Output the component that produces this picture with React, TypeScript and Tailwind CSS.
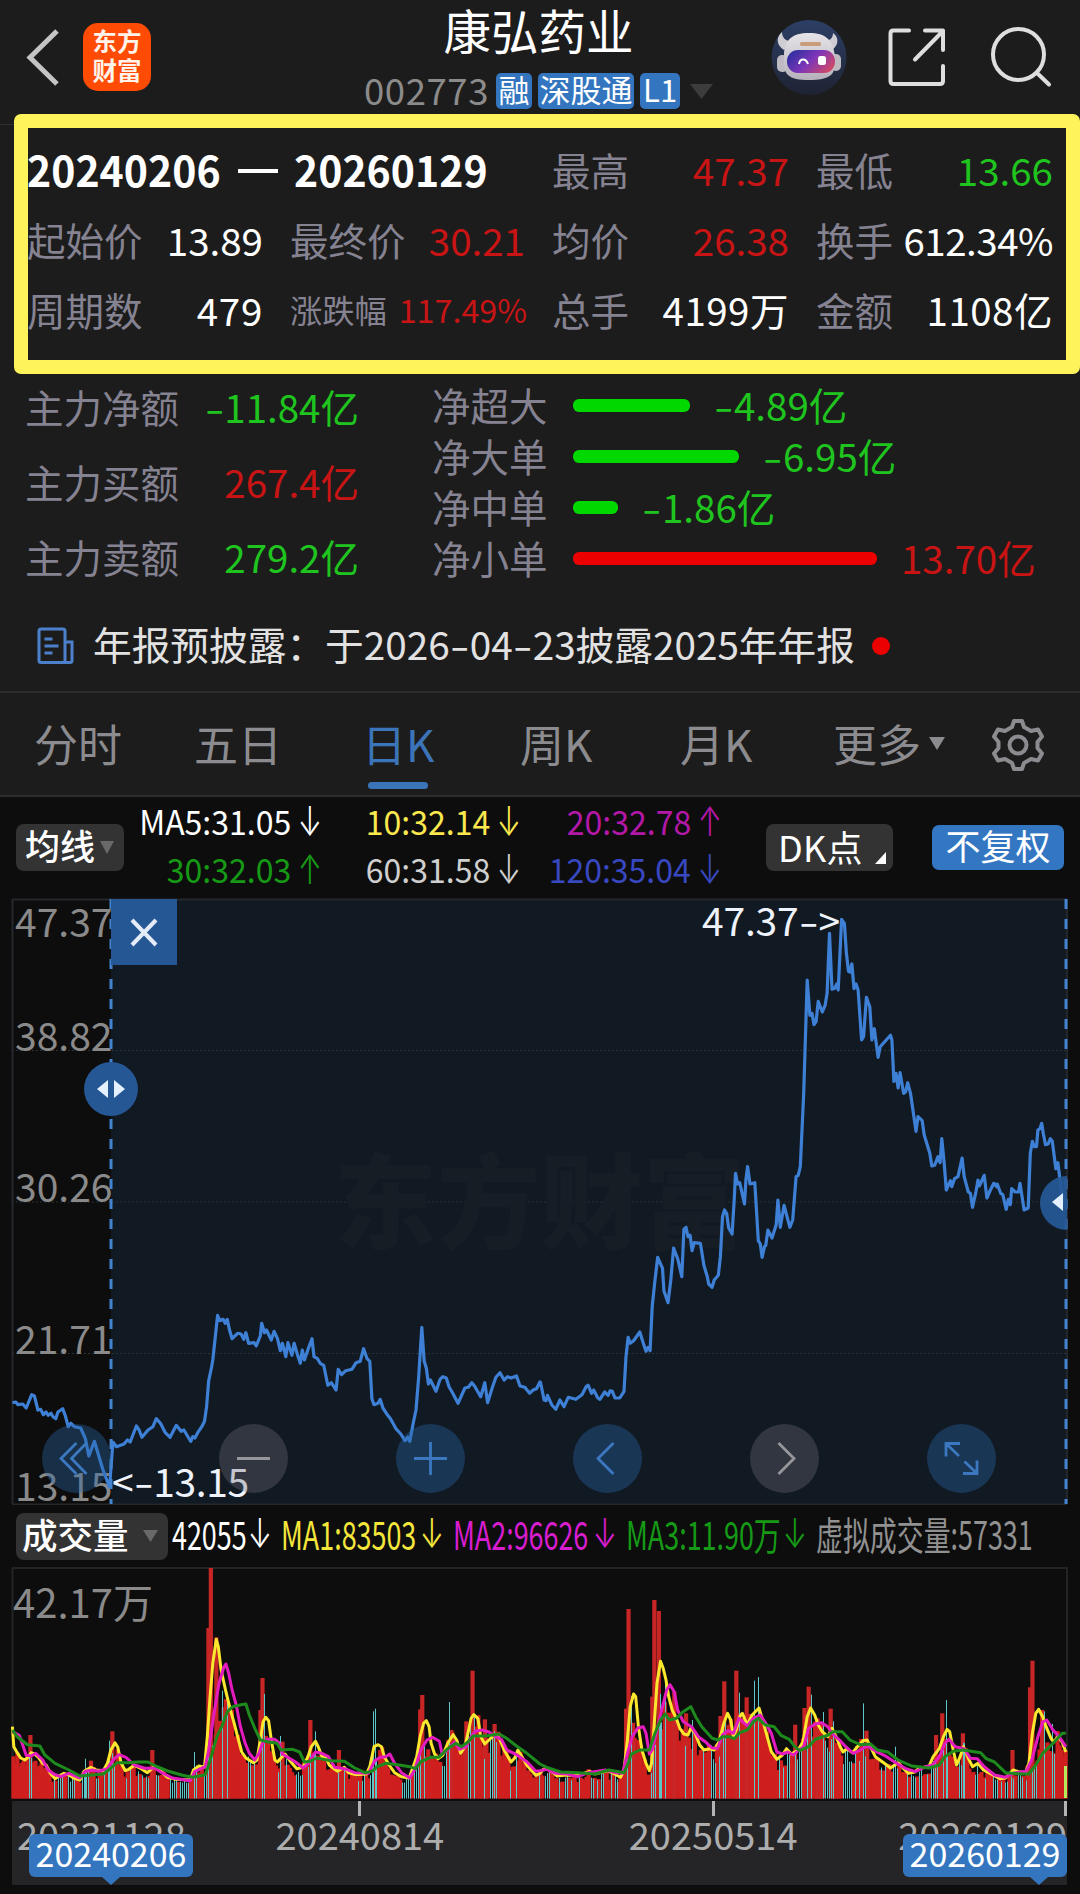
import React from 'react';

type Point = [number, number];

const CHART_SCALE_X = 2.904;
const CHART_SCALE_Y = 3;

// "x,y x,y ..." -> points, the second half of a trace starts at x = 1568
const parse = (s: string, offset = 0): Point[] =>
  s.trim().split(/\s+/).map(p => {
    const [x, y] = p.split(',').map(Number);
    return [x + offset, y] as Point;
  });

const toPolyline = (points: Point[]) =>
  points.map(([x, y]) => `${(x / CHART_SCALE_X).toFixed(1)},${(y / CHART_SCALE_Y).toFixed(1)}`).join(' ');

const priceTrace: Point[] = [
  ...parse(`36,368 46,366 52,374 66,372 76,384 92,344 100,348 110,390 118,388 126,404 134,396 140,406 148,400 154,410 162,416 168,396 182,386 190,408 198,440 206,430 216,440 234,444 248,476 258,528 274,484 298,566 318,622 328,486 338,500 360,492 370,480 378,486 396,438 404,450 412,472 430,450 444,440 454,416 466,430 480,458 494,472 512,436 526,454 534,450 548,474 554,484 560,470 566,474 574,458 586,440 594,424 600,380 606,302 614,264 618,240 632,106 638,122 648,118 654,130 660,118 666,148 674,176 690,160 700,162 708,178 714,158 722,190 738,188 744,198 756,168 760,130 768,158 774,150 788,180 796,154 806,176 814,212 820,190 830,230 836,188 848,226 854,190 864,224 872,250 878,210 884,240 896,204 906,176 912,230 922,236 930,250 940,256 952,316 962,308 976,330 982,268 992,284 1004,272 1022,268 1034,248 1046,244 1056,206 1066,236 1074,244 1080,356 1086,374 1098,370 1104,358 1112,384 1126,406 1134,416 1150,446 1164,462 1176,482 1184,472 1190,484 1200,430 1208,390 1216,290 1225,142 1232,244 1238,264 1244,312 1250,300 1266,334 1278,298 1286,290 1296,294 1304,320 1314,338 1330,370 1350,324 1360,322 1370,308 1378,318 1396,350 1408,308 1416,368 1430,322 1440,292 1452,278 1464,300 1474,290 1484,294 1500,288 1510,318 1524,322 1538,340 1548,330 1558,326 1568,306`),
  ...parse(`2,308 12,360 18,362 22,346 34,374 46,388 58,360 70,380 82,352 104,358 122,344 134,320 140,316 150,340 156,330 168,354 174,358 188,336 198,346 204,332 210,334 218,354 232,354 244,334 250,230 256,172 262,190 272,182 290,156 300,190 308,214 314,202 320,212 326,80 332,20`, 1568),
].map(([x, y]) => [x, y + 1200] as Point).concat(
  parse(`334,1200 342,1132 356,1165 360,1232 372,1268 380,1200 388,1104 400,1136 412,1190 418,1048 424,1042 430,1070 436,1066 442,1112 448,1088 466,1090 476,1156 486,1190 490,1212 500,1222 506,1200 518,1186 524,1130 530,1010 536,990 542,1000 548,1044 558,1062 564,960 568,880 574,912 580,908 594,972 598,900 603,860 610,912 624,908 634,1082 640,1092 645,1132 652,1100 656,1096 662,1050 674,1074 686,1034 691,960 698,1042 709,976 716,1004 726,1042 734,1020 744,890 750,886 756,860 766,640 776,300 784,406 790,400 796,434 802,425 808,364 820,396 828,376 834,340 841,160 848,328 856,325 862,312 866,330 876,118 884,130 890,220 896,274 900,276 906,252 912,326 918,312 924,330 934,480 940,470 948,352 958,380 964,480 971,446 982,532 988,500 1018,466 1022,480 1028,604 1034,580 1040,624 1046,578 1056,640 1062,636 1068,608 1076,640 1092,754 1098,710 1110,722 1116,765 1132,820 1138,858 1146,856 1156,830 1162,848 1167,776 1174,850 1180,930 1192,902 1196,920 1204,896 1214,890 1226,834 1232,890 1244,936 1250,940 1256,982 1266,936 1272,900 1276,918 1290,886 1298,954 1308,930 1318,910 1326,920 1328,912 1338,940 1344,944 1354,988 1360,958 1366,974 1370,926 1380,936 1390,936 1394,910 1406,990 1418,984 1424,820 1430,784 1436,800 1442,800 1446,750 1452,746 1457,730 1462,762 1468,794 1476,792 1482,776 1488,784 1498,866 1504,848 1508,880 1514,930 1524,970`, 1568),
);

const volMa1: Point[] = [
  ...parse(`36,530 40,590 50,608 60,624 72,630 84,620 90,608 100,612 110,620 124,640 134,645 146,670 160,686 172,678 186,670 200,675 214,684 232,690 244,664 264,652 280,660 300,662 312,640 322,600 334,578 342,592 352,640 364,662 374,658 390,646 410,656 428,668 448,650 466,662 486,682 510,688 552,690 562,660 578,648 594,652 602,560 610,440 618,340 628,268 634,290 642,360 656,425 668,475 680,520 690,560 702,606 714,624 736,638 746,630 756,570 764,515 772,502 780,512 788,570 798,630 806,636 814,626 828,612 842,632 862,656 880,652 894,620 904,590 916,574 924,590 936,622 944,618 956,645 980,664 1000,652 1012,668 1036,674 1064,672 1074,650 1086,590 1098,584 1108,590 1116,620 1130,645 1146,668 1166,680 1188,684 1200,650 1210,620 1220,560 1230,520 1238,512 1246,530 1252,580 1262,612 1272,626 1286,616 1300,580 1316,554 1326,570 1338,610 1350,590 1360,545 1368,505 1376,494 1388,506 1396,560 1408,582 1420,570 1436,554 1450,565 1464,600 1484,636 1494,625 1504,600 1516,620 1530,646 1556,676 1568,670`),
  ...parse(`10,658 24,656 50,678 70,676 100,676 124,672 144,664 160,672 196,662 216,672 234,682 244,660 254,570 262,470 272,432 278,440 286,530 296,600 308,640 318,662 324,640 332,520 340,400 350,334 358,355 366,390 374,440 384,480 396,505 406,535 418,552 430,555 438,535 450,548 464,585 476,600 494,596 506,600 520,575 534,520 545,490 554,510 562,560 570,540 580,500 588,490 602,525 616,495 636,474 648,515 660,560 672,605 688,628 704,615 716,596 730,612 750,600 764,575 776,500 786,474 798,495 808,525 820,545 836,560 848,535 860,560 872,590 880,606 892,596 908,608 922,590 938,572 950,570 960,590 974,620 1000,640 1018,654 1040,638 1060,660 1070,670 1088,666 1100,656 1130,648 1142,620 1160,595 1172,560 1182,538 1190,545 1200,600 1210,645 1220,620 1230,590 1244,625 1256,650 1272,640 1288,660 1310,672 1336,686 1352,684 1374,660 1390,665 1410,668 1420,640 1430,550 1440,490 1448,478 1460,500 1470,530 1484,565 1492,576 1504,560 1516,575 1527,606`, 1568),
];

const volMa2: Point[] = [
  ...parse(`36,545 56,556 66,585 76,616 90,618 104,610 124,630 140,660 156,672 176,680 200,670 232,684 248,664 268,660 286,664 312,656 330,628 346,614 366,622 390,645 420,655 450,655 470,668 500,684 552,692 566,664 584,656 596,650 606,600 620,500 636,400 650,352 656,342 664,370 674,420 686,465 698,530 712,580 724,610 740,630 752,610 762,580 776,568 798,568 810,578 820,612 840,625 858,636 880,654 896,640 916,606 934,610 954,620 972,652 1000,656 1030,668 1070,670 1088,632 1104,622 1120,620 1132,612 1146,640 1166,668 1190,684 1204,660 1222,600 1240,570 1256,562 1276,574 1284,612 1300,600 1320,576 1334,598 1354,590 1368,560 1380,544 1400,540 1420,546 1440,560 1456,568 1472,600 1500,614 1530,635 1556,664 1568,662`),
  ...parse(`20,658 46,670 80,672 110,680 140,668 190,660 220,668 240,670 254,610 268,560 284,534 300,530 308,550 318,612 326,600 340,540 356,470 368,420 378,404 390,425 400,480 416,515 440,530 460,560 480,575 500,594 516,595 530,555 546,542 562,550 578,505 602,528 620,505 640,495 656,520 672,550 688,606 704,612 720,606 736,615 752,600 766,590 780,535 800,522 818,518 836,530 848,550 870,570 888,590 910,610 930,600 950,588 976,604 1000,616 1030,636 1060,655 1090,665 1120,650 1140,645 1160,620 1176,580 1188,568 1206,590 1232,596 1250,625 1270,626 1290,650 1320,675 1350,682 1380,668 1412,664 1430,625 1446,560 1460,516 1472,510 1490,540 1508,560 1527,590`, 1568),
];

const volMa3: Point[] = [
  ...parse(`36,540 50,560 80,584 116,588 130,615 160,640 200,660 232,678 260,676 300,672 320,656 340,638 370,638 400,636 430,636 452,648 490,664 530,676 560,682 596,674 606,645 616,610 630,560 644,530 660,485 676,470 700,464 714,462 724,495 740,535 756,570 780,576 804,580 816,600 850,598 870,606 884,636 900,634 920,624 960,632 1000,634 1030,654 1060,668 1080,664 1096,650 1120,640 1160,645 1190,650 1206,656 1224,634 1250,622 1274,622 1300,596 1324,580 1340,590 1360,575 1374,558 1410,558 1450,552 1470,564 1500,588 1530,610 1568,642`),
  ...parse(`20,652 60,666 110,668 160,672 200,660 244,668 256,640 266,612 290,600 318,600 334,550 350,510 364,492 376,510 396,505 416,485 438,470 452,500 470,530 500,565 518,570 530,560 550,560 564,566 580,548 602,540 620,515 634,505 654,525 680,530 700,556 724,568 740,590 754,602 780,590 800,568 836,556 850,545 878,545 900,570 930,584 960,582 980,600 1010,606 1040,630 1080,648 1130,654 1160,645 1176,620 1200,604 1230,600 1280,608 1296,626 1320,636 1352,668 1400,672 1420,672 1440,645 1460,610 1480,590 1504,564 1517,550 1527,550`, 1568),
];

const redSpikes: Point[] = [
  ...parse('88,555 264,632 326,544 442,600 605,234 612,54 628,262 650,472 662,506 756,480 762,384 820,575 901,510 984,600 1220,478 1226,435 1310,540 1354,514 1372,362 1408,508 1436,522'),
  ...parse('250,476 257,177 270,518 326,440 332,150 345,183 390,425 424,490 524,498 535,394 570,362 600,442 741,524 768,474 780,410 806,505 844,476 948,542 1150,555 1168,490 1228,550 1372,600 1423,412 1430,332 1458,480', 1568),
];
const cyanSpikes: Point[] = [
  ...parse('246,626 316,572 564,606 646,422 658,440 768,432 814,558 914,544 1082,484 1088,476 1303,456'),
  ...parse('264,438 350,432 362,390 443,510 577,428 623,392 634,381 786,434 821,486 850,514 937,460 1030,590 1180,450 1232,580 1465,484 1488,522', 1568),
];

const valueAt = (trace: Point[], x: number) => {
  const i = trace.findIndex(p => p[0] >= x);
  if (i <= 0) return trace[i < 0 ? trace.length - 1 : 0][1];
  const [x0, y0] = trace[i - 1];
  const [x1, y1] = trace[i];
  return y0 + ((y1 - y0) * (x - x0)) / (x1 - x0 || 1);
};

const rand = (n: number) => {
  const v = Math.sin(n * 91.17 + 7.3) * 43758.5453;
  return v - Math.floor(v);
};

const days = Array.from({ length: 526 }, (_, i) => {
  const x = 39 + i * 5.82;
  const slope = valueAt(volMa1, x + 10) - valueAt(volMa1, x - 8);
  const base = Math.max(valueAt(volMa1, x), valueAt(volMa3, x) - 40, 470);
  const top = Math.min(base + (rand(i) - 0.25) * (744 - base) * 0.42, 698);
  const limit = slope > 14 ? 0 : slope > 6 ? 0.55 : 0.48;
  return { x, top, up: rand(i + 900) >= limit };
});

const labelCls = 'text-[#858291] whitespace-nowrap';

function Arrow({ up = false, color }: { up?: boolean; color: string }) {
  return (
    <span className={`inline-block w-[18px] font-['Inter'] text-[33px] ${color}`}>
      <span className="-ml-[3px] inline-block origin-center scale-x-[0.88] scale-y-[1.22] font-light">{up ? '↑' : '↓'}</span>
    </span>
  );
}

function Dash() {
  return (
    <span className="inline-block w-[20px] text-center">
      <span className="inline-block scale-x-[1.450]">-</span>
    </span>
  );
}

// figures use a wider minus than the font has
function Figure({ text, className = '' }: { text: string; className?: string }) {
  const parts = text.split('-');
  return (
    <span className={className}>
      {parts.map((part, i) => (
        <React.Fragment key={i}>
          {i > 0 && <Dash />}
          {part}
        </React.Fragment>
      ))}
    </span>
  );
}

function Stat({ label, value, color = 'text-white', small = false, tracking = '' }: { label: string; value: string; color?: string; small?: boolean; tracking?: string }) {
  return (
    <div className={`flex items-center justify-between whitespace-nowrap ${small ? 'text-[32.3px] -mr-[2px]' : 'text-[38.5px]'}`}>
      <span className={labelCls}>{label}</span>
      <span className={`${color} ${tracking}`}>{value}</span>
    </div>
  );
}

function Header() {
  return (
    <header className="grid h-[114px] grid-cols-[300px_1fr_340px] bg-[#1c1c1c]">
      <div className="flex items-start">
        <svg className="ml-[24px] mt-[27px]" width="38" height="60" viewBox="0 0 38 60" fill="none" stroke="#c4c4c4" strokeWidth="5">
          <path d="M33 4 6 30.500 33 57" />
        </svg>
        <div className="ml-[21px] mt-[23px] flex h-[68px] w-[68px] flex-col items-center justify-center rounded-[15px] bg-[#ff4b04] text-[24.5px] font-bold leading-[29px] text-[#fff3ea]">
          <span className="-mt-[4px]">东方</span>
          <span>财富</span>
        </div>
      </div>
      <div className="-ml-[2px] flex flex-col items-center pl-[39px] whitespace-nowrap">
        <h1 className="mt-[2px] text-[47.5px] leading-[56px] text-white">康弘药业</h1>
        <div className="mt-[15px] flex h-[36px] items-center text-[31px] leading-[32px] text-white">
          <span className="mr-[7px] mt-[-2px] text-[36.5px] tracking-[0.6px] text-[#8b8b8b]">002773</span>
          <span className="mr-[6px] flex h-[36px] w-[36px] items-center justify-center rounded-[5px] bg-[#3375bf] pb-[4px]">融</span>
          <span className="mr-[6px] flex h-[36px] w-[96px] items-center justify-center rounded-[5px] bg-[#3375bf] pb-[4px]">深股通</span>
          <span className="flex h-[36px] w-[40px] items-center justify-center rounded-[5px] bg-[#3375bf] pb-[4px]">L1</span>
          <svg className="ml-[10px]" width="23" height="15" viewBox="0 0 23 15"><path d="M0 0h23L11.500 15z" fill="#3c3c3c" /></svg>
        </div>
      </div>
      <div className="flex items-start">
        <svg className="ml-[31px] mt-[20px]" width="76" height="76" viewBox="0 0 76 76">
          <defs>
            <linearGradient id="sky" x1="0" y1="0" x2="0" y2="1">
              <stop offset="0" stopColor="#2d3f66" />
              <stop offset="1" stopColor="#1e2333" />
            </linearGradient>
            <linearGradient id="visor" x1="0" y1="0.2" x2="1" y2="0.700">
              <stop offset="0" stopColor="#2b2f9f" />
              <stop offset="0.500" stopColor="#7d35b8" />
              <stop offset="1" stopColor="#d14a68" />
            </linearGradient>
            <linearGradient id="shell" x1="0" y1="0" x2="0" y2="1">
              <stop offset="0" stopColor="#e6e4e8" />
              <stop offset="1" stopColor="#b5b0bb" />
            </linearGradient>
          </defs>
          <circle cx="38" cy="37.500" r="37.500" fill="url(#sky)" />
          <path d="M11 12c-6 5-6 13 2 18l8-8c-6-1-10-4-10-10zM62 13c7 5 5 13-1 17l-9-9c6 0 10-2 10-8z" fill="#cfcdd3" />
          <rect x="6" y="35" width="11" height="17" rx="5" fill="#bdbac2" />
          <rect x="60" y="34" width="10" height="17" rx="5" fill="#bdbac2" />
          <path d="M13 36c0-16 8-23 25-23s24 7 26 23c1 9 0 15-4 19-5 4-12 5-22 5s-17-1-21-5c-4-4-5-10-4-19z" fill="url(#shell)" />
          <rect x="29" y="22" width="21" height="4" rx="1.500" fill="#c99c7c" />
          <rect x="16" y="30" width="48" height="23" rx="11" fill="url(#visor)" />
          <path d="M28 44c1-6 7-6 9 0" fill="none" stroke="#fff" strokeWidth="2" />
          <rect x="47" y="36" width="8" height="9" rx="2.500" fill="#fff" />
        </svg>
        <svg className="ml-[41px] mt-[28px]" width="58" height="59" viewBox="0 0 58 59" fill="none" stroke="#dedede" strokeWidth="4" strokeLinecap="round" strokeLinejoin="round">
          <path d="M21 2.500H5.500Q2.500 2.500 2.500 5.500V53q0 3 3 3H52q3 0 3-3V38" />
          <path d="M37 2.500h18V22M54 4 27 31.500" />
        </svg>
        <svg className="ml-[45px] mt-[26px]" width="62" height="62" viewBox="0 0 62 62" fill="none" stroke="#dedede" strokeWidth="4" strokeLinecap="round">
          <circle cx="27.500" cy="28.500" r="25.500" />
          <path d="M46 47 58 58.500" />
        </svg>
      </div>
    </header>
  );
}

function SummaryBox() {
  return (
    <section className="flex">
      <span className="mt-[10px] h-[1px] w-[14px] bg-[#303030]" />
      <div className="h-[260px] w-[1066px] rounded-[7px] border-[14px] border-[#fff35c] bg-[#fff35c]">
        <div className="h-[232px] bg-[#1c1c1c] pr-[14px] pt-[6px] leading-[70px]">
          <div className="-ml-[1px] grid grid-cols-[498px_237px_237px] gap-x-[27px]">
            <div className="flex whitespace-pre text-[42.5px] font-bold text-white">
              <span className="w-[192px]"><span className="inline-block origin-left scale-x-[0.965]">20240206</span></span>
              <span className="ml-[19px] mr-[16px] mt-[4px] inline-block h-[4px] w-[40px] self-center bg-white" />
              <span className="inline-block origin-left scale-x-[0.965]">20260129</span>
            </div>
            <Stat label="最高" value="47.37" color="text-[#c81414]" />
            <Stat label="最低" value="13.66" color="text-[#1fc41f]" />
          </div>
          <div className="-ml-[1px] grid grid-cols-[236px_235px_237px_237px] gap-x-[27px]">
            <Stat label="起始价" value="13.89" />
            <Stat label="最终价" value="30.21" color="text-[#c81414]" />
            <Stat label="均价" value="26.38" color="text-[#c81414]" />
            <Stat label="换手" value="612.34%" tracking="tracking-[-0.5px]" />
            <Stat label="周期数" value="479" tracking="tracking-[0.7px]" />
            <Stat label="涨跌幅" value="117.49%" color="text-[#c81414]" small />
            <Stat label="总手" value="4199万" tracking="tracking-[0.5px]" />
            <Stat label="金额" value="1108亿" tracking="tracking-[0.5px]" />
          </div>
        </div>
      </div>
    </section>
  );
}

const mainForce = [
  { label: '主力净额', value: '-11.84亿', color: 'text-[#1fc41f]' },
  { label: '主力买额', value: '267.4亿', color: 'text-[#c81414]' },
  { label: '主力卖额', value: '279.2亿', color: 'text-[#1fc41f]' },
];

const netOrders = [
  { label: '净超大', value: '-4.89亿', width: 117, bar: 'bg-[#00d800]', color: 'text-[#1fc41f]' },
  { label: '净大单', value: '-6.95亿', width: 166, bar: 'bg-[#00d800]', color: 'text-[#1fc41f]' },
  { label: '净中单', value: '-1.86亿', width: 45, bar: 'bg-[#00d800]', color: 'text-[#1fc41f]' },
  { label: '净小单', value: '13.70亿', width: 304, bar: 'bg-[#ec0000]', color: 'text-[#c81414]' },
];

function FundFlow() {
  return (
    <section className="flex h-[218px] text-[38.5px]">
      <div className="ml-[25px] -mt-[5px] w-[334px] leading-[75px]">
        {mainForce.map(row => (
          <div key={row.label} className="flex justify-between whitespace-nowrap">
            <span className={labelCls}>{row.label}</span>
            <Figure text={row.value} className={row.color} />
          </div>
        ))}
      </div>
      <div className="ml-[73px] mt-[5px] leading-[51px]">
        {netOrders.map(row => (
          <div key={row.label} className="flex h-[51px] items-center whitespace-nowrap">
            <span className={`w-[141px] ${labelCls}`}>{row.label}</span>
            <span className={`mt-[1px] h-[13px] rounded-[6px] ${row.bar}`} style={{ width: row.width }} />
            <Figure text={row.value} className={`ml-[24px] ${row.color}`} />
          </div>
        ))}
      </div>
    </section>
  );
}

function Notice() {
  return (
    <section className="flex h-[101px] items-center border-b-2 border-[#2d2d2d] pt-[4px] text-[38.7px] text-[#e2e2e2]">
      <svg className="ml-[37px] mt-[5px]" width="37" height="38" viewBox="0 0 37 38" fill="none" stroke="#4c80cc" strokeWidth="3">
        <path d="M28 35.500V4q0-2-2-2H4Q2 2 2 4v29.500q0 2 2 2h29q2 0 2-2V15h-7" />
        <path d="M7.500 12h8M7.500 19h14M7.500 26h8" />
      </svg>
      <Figure text="年报预披露：于2026-04-23披露2025年年报" className="ml-[19px] whitespace-nowrap" />
      <span className="ml-[17px] mt-[4px] h-[18px] w-[18px] shrink-0 rounded-full bg-[#ec0000]" />
    </section>
  );
}

function Tabs() {
  return (
    <nav className="flex h-[104px] border-b-2 border-[#2d2d2d] text-[44px] leading-[101px] text-[#8c8c90] whitespace-nowrap">
      <span className="ml-[34px] w-[160px]">分时</span>
      <span className="w-[168px]">五日</span>
      <span className="flex w-[158px] flex-col text-[#3b74b9]">
        日K
        <span className="ml-[6px] -mt-[12px] h-[7px] w-[60px] rounded-full bg-[#3b74b9]" />
      </span>
      <span className="w-[160px]">周K</span>
      <span className="w-[153px]">月K</span>
      <span className="w-[96px]">更多</span>
      <svg className="mt-[44px]" width="16" height="13" viewBox="0 0 16 13"><path d="M0 0h16L8 13z" fill="#8c8c90" /></svg>
      <svg className="ml-[46px] mt-[25px]" width="54" height="54" viewBox="0 0 54 54" fill="none" stroke="#8c8c90" strokeWidth="4" strokeLinejoin="round">
        <path d="M23 3h8l2 6 7 4 7-1.500 4 7-4.500 5.500v6l4.500 5.500-4 7-7-1.500-7 4-2 6h-8l-2-6-7-4-7 1.500-4-7 4.500-5.500v-6L3 18.500l4-7 7 1.500 7-4z" />
        <circle cx="27" cy="27" r="8.500" />
      </svg>
    </nav>
  );
}

function MaItem({ text, up = false, color }: { text: string; up?: boolean; color: string }) {
  return (
    <span className={`flex items-center justify-end whitespace-nowrap ${color}`}>
      <span className="mr-[8px] origin-right scale-x-[0.955]">{text}</span>
      <Arrow up={up} color={color} />
    </span>
  );
}

function MaBar() {
  return (
    <section className="flex h-[101px] items-start text-[33.5px]">
      <div className="ml-[16px] mt-[27px] flex h-[47px] w-[108px] items-center rounded-[8px] bg-[#333333] pl-[9px] text-[35px] font-medium text-white">
        <span className="-mt-[5px] whitespace-nowrap">均线</span>
        <svg className="ml-[5px]" width="14" height="13" viewBox="0 0 14 13"><path d="M0 0h14L7 13z" fill="#696969" /></svg>
      </div>
      <div className="grid w-[594px] grid-cols-[193px_199px_201px] leading-[48px]">
        <MaItem text="MA5:31.05" color="text-white" />
        <MaItem text="10:32.14" color="text-[#fbe84e]" />
        <MaItem text="20:32.78" up color="text-[#b418a8]" />
        <MaItem text="30:32.03" up color="text-[#169a16]" />
        <MaItem text="60:31.58" color="text-[#cfcfcf]" />
        <MaItem text="120:35.04" color="text-[#3848c0]" />
      </div>
      <div className="ml-[48px] mt-[27px] flex h-[47px] w-[127px] items-center rounded-[8px] bg-[#333333] pl-[12px] text-[36px] text-white">
        <span className="-mt-[4px] whitespace-nowrap tracking-[0.3px]">DK点</span>
        <svg className="ml-auto mr-[7px] mt-[20px]" width="11" height="12" viewBox="0 0 11 12"><path d="M11 0v12H0z" fill="#fff" /></svg>
      </div>
      <div className="ml-[39px] mt-[28px] flex h-[45px] w-[132px] items-center justify-center rounded-[7px] bg-[#3377c3] pb-[5px] text-[35px] text-white whitespace-nowrap">不复权</div>
    </section>
  );
}

function PriceChart() {
  return (
    <section className="relative h-[607px] text-[39px] leading-[40px]">
      {/* chart origin is 18px above this section */}
      <svg className="absolute inset-0" width="1080" height="607" viewBox="0 18 1080 607">
        <rect x="111" y="19" width="956" height="605" fill="#111922" />
        <path d="M12 19.500H1067M12 624.500H1067M12.500 19V624M1067 19V624" stroke="#24282d" strokeWidth="2" fill="none" />
        <path d="M12 170.500H1067M12 322H1067M12 473.500H1067" stroke="#2b3137" strokeWidth="1" strokeDasharray="2 2" />
      </svg>
      <div className="absolute left-[334px] top-[229px] text-[103px] font-black leading-[140px] text-[#161d25] whitespace-nowrap">东方财富</div>
      <div className="absolute left-[15px] top-[2px] text-[#8a8a8a]">47.37</div>
      <div className="absolute left-[15px] top-[116px] text-[#8a8a8a]">38.82</div>
      <div className="absolute left-[15px] top-[267px] text-[#8a8a8a]">30.26</div>
      <div className="absolute left-[15px] top-[419px] text-[#8a8a8a]">21.71</div>
      <div className="absolute left-[15px] top-[566px] text-[#8a8a8a]">13.15</div>
      <svg className="absolute inset-0" width="1080" height="607" viewBox="0 18 1080 607">
        <polyline points={toPolyline(priceTrace)} fill="none" stroke="#3d80d6" strokeWidth="3.200" strokeLinejoin="round" />
        <path d="M111 19V624M1066 19V624" stroke="#4384d0" strokeWidth="3" strokeDasharray="10 10" />
        <rect x="111" y="19" width="66" height="66" fill="#265795" />
        <path d="M132 40 156 65M156 40 132 65" stroke="#e4ecf8" strokeWidth="4" />
        <circle cx="111" cy="209" r="27" fill="#265795" />
        <path d="M108 200v18l-11-9zM114 200v18l11-9z" fill="#e4f0ff" />
        <path d="M1067 296a27 27 0 0 0 0 54z" fill="#265795" opacity="0.95" />
        <path d="M1063 313v18l-11-9z" fill="#e4f0ff" />
      </svg>
      <Figure text="47.37->" className="absolute left-[702px] top-[1px] tracking-[-0.2px] text-[#eef3fb] whitespace-nowrap" />
      <Figure text="<-13.15" className="absolute left-[112px] top-[562px] tracking-[-0.4px] text-[#eef3fb] whitespace-nowrap" />
      <svg className="absolute inset-0" width="1080" height="607" viewBox="0 18 1080 607" fill="none" strokeWidth="2.800">
        <g fill="#2966a8" fillOpacity="0.38">
          <circle cx="76.500" cy="578.500" r="34.500" />
          <circle cx="430.500" cy="578.500" r="34.500" />
          <circle cx="607.500" cy="578.500" r="34.500" />
          <circle cx="961.500" cy="578.500" r="34.500" />
        </g>
        <g fill="#70707a" fillOpacity="0.34">
          <circle cx="253.500" cy="578.500" r="34.500" />
          <circle cx="784.500" cy="578.500" r="34.500" />
        </g>
        <g stroke="#3b78c0">
          <path d="M76.500 563 61 578.500 76.500 594M86.500 563 71.500 578.500 86.500 594" />
          <path d="M414 578.500h33M430.500 562v33" />
          <path d="M613.500 563 598 578.500 613.500 594" />
          <path d="M946 576.500V563.500h14M946 563.500 959 576M977 580.500V593.500h-14M977 593.500 964.500 581.500" />
        </g>
        <path d="M237 578.500h33M778.500 563 794 578.500 778.500 594" stroke="#96969b" />
      </svg>
    </section>
  );
}

function VolItem({ text, width, color, arrow = true }: { text: string; width: number; color: string; arrow?: boolean }) {
  return (
    <span className={`flex items-center whitespace-nowrap ${color}`} style={{ width }}>
      <span className="w-0 flex-1"><span className="inline-block origin-left scale-x-[0.69]">{text}</span></span>
      {arrow && <span className="mr-[14px] flex"><Arrow color={color} /></span>}
    </span>
  );
}

function VolumeBar() {
  return (
    <section className="flex h-[62px] items-center text-[39px] leading-[50px]">
      <div className="ml-[16px] flex h-[47px] w-[152px] items-center rounded-[8px] bg-[#333333] pl-[6px] text-[35.5px] font-medium text-white">
        <span className="-mt-[5px] whitespace-nowrap">成交量</span>
        <svg className="ml-[14px]" width="15" height="12" viewBox="0 0 15 12"><path d="M0 0h15L7.500 12z" fill="#696969" /></svg>
      </div>
      <div className="-mt-[6px] ml-[4px] flex">
        <VolItem text="42055" width={109} color="text-white" />
        <VolItem text="MA1:83503" width={172} color="text-[#f5e63c]" />
        <VolItem text="MA2:96626" width={173} color="text-[#d81ed0]" />
        <VolItem text="MA3:11.90万" width={190} color="text-[#169a16]" />
        <VolItem text="虚拟成交量:57331" width={230} color="text-[#919191]" arrow={false} />
      </div>
    </section>
  );
}

function VolumeChart() {
  return (
    <section className="relative h-[234px]">
      {/* chart origin is 17px above this section */}
      <svg className="absolute inset-0" width="1080" height="234" viewBox="0 17 1080 234">
        <path d="M12 18H1067V249M12.500 18V249" stroke="#242424" strokeWidth="2" fill="none" />
        {days.filter(d => d.up).map(d => (
          <rect key={d.x} x={d.x / CHART_SCALE_X - 2.1} y={d.top / 3} width="4.200" height={248.5 - d.top / 3} fill="#cf1f1f" />
        ))}
        {redSpikes.map(([x, y]) => (
          <rect key={x} x={x / CHART_SCALE_X - 2} y={y / 3} width="4.200" height={248.5 - y / 3} fill="#c82626" />
        ))}
        {days.filter(d => !d.up).map(d => (
          <rect key={d.x} x={Math.round(d.x / CHART_SCALE_X)} y={d.top / 3} width="1" height={248.5 - d.top / 3} fill="#5cc6c8" />
        ))}
        {cyanSpikes.map(([x, y]) => (
          <rect key={x} x={Math.round(x / CHART_SCALE_X)} y={y / 3} width="1" height={248.5 - y / 3} fill="#5cc6c8" />
        ))}
        <rect x="1064" y="216" width="3" height="32" fill="#b5e85a" />
        <g fill="none" strokeWidth="3" strokeLinejoin="round">
          <polyline points={toPolyline(volMa1)} stroke="#fbe82e" />
          <polyline points={toPolyline(volMa2)} stroke="#e41cc0" />
          <polyline points={toPolyline(volMa3)} stroke="#1e8a1e" />
        </g>
      </svg>
      <div className="absolute left-[13px] top-[12px] text-[40px] leading-[44px] text-[#8a8a8a]">42.17万</div>
    </section>
  );
}

function DateAxis() {
  return (
    <section className="relative ml-[12px] h-[84px] w-[1055px] bg-[#252527] text-[38px] leading-[65px] text-[#adadad]">
      <div className="flex">
        <span className="ml-[5px] w-[259px]">20231128</span>
        <span className="w-[354px]">20240814</span>
        <span className="w-[270px]">20250514</span>
        <span>20260129</span>
      </div>
      <span className="absolute left-[346px] top-0 h-[15px] w-[3px] bg-[#b4b4b4]" />
      <span className="absolute left-[700px] top-0 h-[15px] w-[3px] bg-[#b4b4b4]" />
      <span className="absolute right-0 top-0 h-[15px] w-[3px] bg-[#b4b4b4]" />
      <div className="absolute left-[17px] top-[33px] text-[34px] leading-[37px] text-white">
        <div className="flex h-[43px] w-[164px] justify-center rounded-[6px] bg-[#3375bf]">20240206</div>
        <svg className="ml-[73px]" width="18" height="8" viewBox="0 0 18 8"><path d="M0 0h18L9 8z" fill="#3375bf" /></svg>
      </div>
      <div className="absolute right-0 top-[33px] text-[34px] leading-[37px] text-white">
        <div className="flex h-[43px] w-[164px] justify-center rounded-[6px] bg-[#3375bf]">20260129</div>
        <svg className="ml-[127px]" width="18" height="8" viewBox="0 0 18 8"><path d="M0 0h18L9 8z" fill="#3375bf" /></svg>
      </div>
    </section>
  );
}

export default function App() {
  return (
    <main className="h-[1894px] w-[1080px] bg-[#0d0d0d] font-['Noto_Sans_CJK_SC',sans-serif]">
      <div className="bg-[#1c1c1c]">
        <Header />
        <SummaryBox />
        <FundFlow />
        <Notice />
        <Tabs />
      </div>
      <MaBar />
      <PriceChart />
      <VolumeBar />
      <VolumeChart />
      <DateAxis />
    </main>
  );
}
